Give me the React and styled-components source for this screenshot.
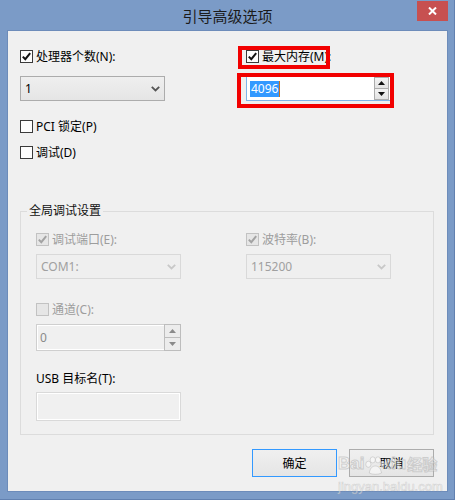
import React from "react";
import styled, { createGlobalStyle } from "styled-components";

const FONT = `"Noto Sans", "Noto Sans CJK SC", sans-serif`;

const GlobalStyle = createGlobalStyle`
  html, body {
    margin: 0;
    padding: 0;
    background: #7b9bc7;
  }
  body {
    font-family: ${FONT};
    font-size: 12px;
  }
`;

function Check({ disabled }) {
  return (
    <svg width="11" height="11" viewBox="0 0 11 11">
      <path
        d="M1.8 5.6 L4.3 8.2 L9.2 2.2"
        fill="none"
        stroke={disabled ? "#a3a3a3" : "#111"}
        strokeWidth="2"
      />
    </svg>
  );
}

function Chevron({ disabled }) {
  return (
    <svg width="9" height="6" viewBox="0 0 9 6">
      <path
        d="M0.8 0.8 L4.5 4.5 L8.2 0.8"
        fill="none"
        stroke={disabled ? "#c8c8c8" : "#555"}
        strokeWidth="1.8"
      />
    </svg>
  );
}

function Arrow({ down, color }) {
  return (
    <svg width="7" height="4" viewBox="0 0 7 4">
      <polygon
        points={down ? "0,0 7,0 3.5,4" : "0,4 7,4 3.5,0"}
        fill={color}
      />
    </svg>
  );
}

function CheckBox({ label, checked, disabled }) {
  return (
    <CheckRow $disabled={disabled}>
      <Box $disabled={disabled}>{checked && <Check disabled={disabled} />}</Box>
      <span>{label}</span>
    </CheckRow>
  );
}

function Spinner({ value, height, disabled, focused, selected }) {
  const arrow = disabled ? "#8a8a8a" : "#111";
  return (
    <SpinBox $h={height} $disabled={disabled} $focused={focused}>
      <SpinText $disabled={disabled}>
        {selected ? (
          <>
            <Selection>{value}</Selection>
            <Caret />
          </>
        ) : (
          value
        )}
      </SpinText>
      <SpinButtons $disabled={disabled}>
        <SpinButton $disabled={disabled}>
          <Arrow color={arrow} />
        </SpinButton>
        <SpinButton $disabled={disabled}>
          <Arrow down color={arrow} />
        </SpinButton>
      </SpinButtons>
    </SpinBox>
  );
}

export default function App() {
  return (
    <>
      <GlobalStyle />
      <Window>
        <TitleBar>
          <span />
          <Title>引导高级选项</Title>
          <CloseButton>
            <svg width="9" height="8" viewBox="0 0 9 8">
              <path d="M1 0.5 L8 7.5 M8 0.5 L1 7.5" stroke="#fff" strokeWidth="2" />
            </svg>
          </CloseButton>
        </TitleBar>

        <Client>
          <TopGrid>
            <Column>
              <CheckBox label="处理器个数(N):" checked />
              <Combo $top={11}>
                <span>1</span>
                <Chevron />
              </Combo>
            </Column>
            <Column>
              <Marked $l={-8} $t={-2} $w={92} $h={23}>
                <CheckBox label="最大内存(M):" checked />
              </Marked>
              <Marked $l={-9} $t={-3} $w={157} $h={35} $top={11}>
                <Spinner value="4096" height={25} focused selected />
              </Marked>
            </Column>
          </TopGrid>

          <Option $top={17}>
            <CheckBox label="PCI 锁定(P)" />
          </Option>
          <Option $top={9}>
            <CheckBox label="调试(D)" />
          </Option>

          <Group>
            <Legend>全局调试设置</Legend>
            <GroupGrid>
              <Column>
                <CheckBox label="调试端口(E):" checked disabled />
                <Combo $top={6} $disabled>
                  <span>COM1:</span>
                  <Chevron disabled />
                </Combo>
                <Option $top={22}>
                  <CheckBox label="通道(C):" disabled />
                </Option>
                <Option $top={6}>
                  <Spinner value="0" height={27} disabled />
                </Option>
                <FieldLabel $top={20}>USB 目标名(T):</FieldLabel>
                <TextBox $top={5} />
              </Column>
              <Column>
                <CheckBox label="波特率(B):" checked disabled />
                <Combo $top={6} $disabled>
                  <span>115200</span>
                  <Chevron disabled />
                </Combo>
              </Column>
            </GroupGrid>
          </Group>

          <Footer>
            <Button $default>确定</Button>
            <Button>取消</Button>
          </Footer>
        </Client>

        <Watermark>
          <WatermarkBrand>
            <span>Bai</span>
            <svg width="21" height="20" viewBox="0 0 24 22">
              <g fill="rgba(255,255,255,0.5)" stroke="rgba(175,175,175,0.5)">
                <ellipse cx="5" cy="9" rx="3" ry="3.5" />
                <ellipse cx="10" cy="4" rx="3" ry="3.5" />
                <ellipse cx="16" cy="4" rx="3" ry="3.5" />
                <ellipse cx="21" cy="9" rx="2.5" ry="3.5" />
                <path d="M6 19 C7 13 10 11 13 11 C16 11 19 13 20 19 C17 21 9 21 6 19 Z" />
              </g>
            </svg>
            <span>du</span>
            <WatermarkCjk>经验</WatermarkCjk>
          </WatermarkBrand>
          <WatermarkSite>jingyan.baidu.com</WatermarkSite>
        </Watermark>
      </Window>
    </>
  );
}

const Window = styled.div`
  position: relative;
  width: 455px;
  height: 500px;
  box-sizing: border-box;
  display: flex;
  flex-direction: column;
  background: #7b9bc7;
  box-shadow: inset -3px -3px 0 -2px #6281b0;
  overflow: hidden;
`;

const TitleBar = styled.div`
  height: 30px;
  flex: none;
  display: grid;
  grid-template-columns: 1fr auto 1fr;
  padding: 0 7px;
`;

const Title = styled.div`
  font-family: "Noto Sans CJK SC", sans-serif;
  font-size: 15px;
  line-height: 30px;
  color: #1b1b1b;
  padding-top: 1px;
`;

const CloseButton = styled.div`
  justify-self: end;
  align-self: start;
  margin-top: 1px;
  width: 31px;
  height: 20px;
  background: #c75050;
  display: flex;
  align-items: center;
  justify-content: center;
`;

const Client = styled.div`
  flex: 1;
  margin: 0 7px 8px 7px;
  border: 1px solid #6d8cba;
  background: #f0f0f0;
  padding: 0 13px 0 12px;
  display: flex;
  flex-direction: column;
  align-items: stretch;
`;

const TopGrid = styled.div`
  margin-top: 17px;
  display: grid;
  grid-template-columns: 226px 1fr;
`;

const Column = styled.div`
  display: flex;
  flex-direction: column;
  align-items: flex-start;
`;

const CheckRow = styled.label`
  display: flex;
  align-items: center;
  gap: 3px;
  height: 17px;
  line-height: 17px;
  white-space: nowrap;
  color: ${(p) => (p.$disabled ? "#9d9d9d" : "#000")};
`;

const Box = styled.span`
  flex: none;
  width: 13px;
  height: 13px;
  box-sizing: border-box;
  border: 1px solid ${(p) => (p.$disabled ? "#c2c2c2" : "#3a3a3a")};
  background: ${(p) => (p.$disabled ? "#e6e6e6" : "#fdfdfd")};
  display: flex;
  align-items: center;
  justify-content: center;
`;

const Option = styled.div`
  margin-top: ${(p) => p.$top || 0}px;
`;

const Marked = styled.div`
  position: relative;
  margin-top: ${(p) => p.$top || 0}px;

  &::after {
    content: "";
    position: absolute;
    left: ${(p) => p.$l}px;
    top: ${(p) => p.$t}px;
    width: ${(p) => p.$w}px;
    height: ${(p) => p.$h}px;
    box-sizing: border-box;
    border: 4px solid #f20000;
    pointer-events: none;
  }
`;

const Combo = styled.div`
  margin-top: ${(p) => p.$top || 0}px;
  width: 145px;
  height: 25px;
  box-sizing: border-box;
  border: 1px solid ${(p) => (p.$disabled ? "#d9d9d9" : "#acacac")};
  background: ${(p) =>
    p.$disabled ? "#efefef" : "linear-gradient(#efefef, #e5e5e5)"};
  color: ${(p) => (p.$disabled ? "#a0a0a0" : "#000")};
  display: flex;
  align-items: center;
  justify-content: space-between;
  padding: 0 4px 0 4px;
  line-height: 16px;
`;

const SpinBox = styled.div`
  width: 145px;
  height: ${(p) => p.$h}px;
  box-sizing: border-box;
  border: 1px solid
    ${(p) => (p.$focused ? "#7eb4ea" : p.$disabled ? "#cfcfcf" : "#acacac")};
  background: ${(p) => (p.$disabled ? "#f0f0f0" : "#fff")};
  box-shadow: ${(p) => (p.$disabled ? "inset 0 0 0 1px #fff" : "none")};
  display: flex;
  align-items: stretch;
`;

const SpinText = styled.div`
  flex: 1;
  display: flex;
  align-items: center;
  padding-left: 3px;
  color: ${(p) => (p.$disabled ? "#8a8a8a" : "#000")};
`;

const Selection = styled.span`
  background: #3399ff;
  color: #fff;
  line-height: 16px;
  padding: 0 1px;
`;

const Caret = styled.span`
  width: 1px;
  height: 16px;
  background: #c8701e;
`;

const SpinButtons = styled.div`
  flex: none;
  width: ${(p) => (p.$disabled ? 17 : 15)}px;
  margin: ${(p) => (p.$disabled ? "-1px -1px -1px 0" : "0 1px 0 0")};
  display: flex;
  flex-direction: column;
`;

const SpinButton = styled.div`
  flex: 1;
  box-sizing: border-box;
  border: 1px solid ${(p) => (p.$disabled ? "#bdbdbd" : "#acacac")};
  background: ${(p) =>
    p.$disabled ? "#ececec" : "linear-gradient(#f3f3f3, #e3e3e3)"};
  display: flex;
  align-items: center;
  justify-content: center;

  & + & {
    border-top: none;
  }
`;

const Group = styled.fieldset`
  margin: 42px 0 0 0;
  padding: 12px 0 13px 0;
  border: 1px solid #dcdcdc;
  min-inline-size: 0;
`;

const Legend = styled.legend`
  margin-left: 6px;
  padding: 0 2px;
  line-height: 16px;
  color: #111;
`;

const GroupGrid = styled.div`
  display: grid;
  grid-template-columns: 210px 145px;
  align-items: start;
  padding-left: 15px;
`;

const FieldLabel = styled.div`
  margin-top: ${(p) => p.$top || 0}px;
  line-height: 16px;
  color: #000;
`;

const TextBox = styled.div`
  margin-top: ${(p) => p.$top || 0}px;
  width: 145px;
  height: 29px;
  box-sizing: border-box;
  border: 1px solid #d9d9d9;
  box-shadow: inset 0 0 0 1px #fff;
  background: #f0f0f0;
`;

const Footer = styled.div`
  margin-top: 14px;
  display: flex;
  justify-content: flex-end;
  gap: 12px;
`;

const Button = styled.button`
  width: 85px;
  height: 28px;
  padding: 0;
  border: 1px solid ${(p) => (p.$default ? "#3399ff" : "#acacac")};
  background: linear-gradient(#f0f0f0, #e5e5e5);
  font-family: ${FONT};
  font-size: 12px;
  color: #000;
`;

const Watermark = styled.div`
  position: absolute;
  left: 338px;
  top: 452px;
  display: flex;
  flex-direction: column;
  align-items: flex-start;
  white-space: nowrap;
  pointer-events: none;
`;

const WatermarkBrand = styled.div`
  display: flex;
  align-items: flex-end;
  font-family: "Liberation Sans", sans-serif;
  font-weight: bold;
  font-size: 17px;
  line-height: 24px;
  color: rgba(255, 255, 255, 0.4);
  -webkit-text-stroke: 1px rgba(170, 170, 170, 0.5);
`;

const WatermarkCjk = styled.span`
  font-family: "Noto Sans CJK SC", sans-serif;
  font-size: 15px;
  margin-left: 1px;
`;

const WatermarkSite = styled.div`
  margin-top: 4px;
  font-family: "Liberation Sans", sans-serif;
  font-size: 13px;
  line-height: 13px;
  color: rgba(255, 255, 255, 0.45);
  -webkit-text-stroke: 0.6px rgba(170, 170, 170, 0.45);
`;
